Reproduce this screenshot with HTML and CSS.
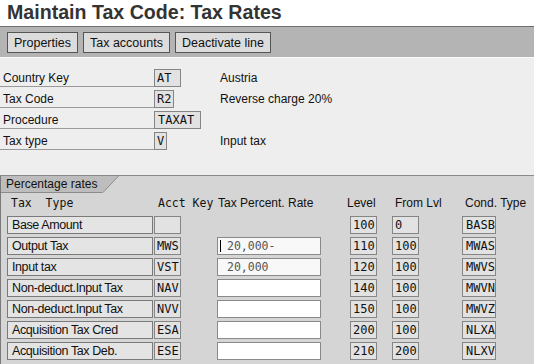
FILE: index.html
```html
<html>
<head>
<title>Maintain Tax Code: Tax Rates</title>
<link rel="stylesheet" href="styles.css">
</head>
<body>
	<div id='screen'>

		<h1 class="title">Maintain Tax Code: Tax Rates</h1>

		<div class="toolbar">
			<button class="btn">Properties</button>
			<button class="btn">Tax accounts</button>
			<button class="btn">Deactivate line</button>
		</div>

		<div class="head">
			<div class="hrow">
				<span class="hlabel">Country Key</span>
				<span class="fld w2">AT</span>
				<span class="desc">Austria</span>
			</div>
			<div class="hrow">
				<span class="hlabel">Tax Code</span>
				<span class="fld w1">R2</span>
				<span class="desc">Reverse charge 20%</span>
			</div>
			<div class="hrow">
				<span class="hlabel">Procedure</span>
				<span class="fld w3">TAXAT</span>
				<span class="desc"></span>
			</div>
			<div class="hrow">
				<span class="hlabel">Tax type</span>
				<span class="fld w0">V</span>
				<span class="desc">Input tax</span>
			</div>
		</div>

		<div class="panel">
			<div class="tabs">
				<span class="tab">Percentage rates</span>
				<svg class="tab-edge" width="17" height="17" viewBox="0 0 17 17">
					<polygon points="0,0 16,0 0,17" fill="#bdbdbd"/>
					<line x1="16.5" y1="0" x2="0.5" y2="17" stroke="#8a8a8a" stroke-width="1"/>
				</svg>
			</div>

			<div class="grid">
				<span class="colhead mono">Tax  Type</span>
				<span class="colhead mono">Acct Key</span>
				<span class="colhead">Tax Percent. Rate</span>
				<span class="colhead lvl">Level</span>
				<span class="colhead from">From Lvl</span>
				<span class="colhead cond">Cond. Type</span>

				<span class="lbl">Base Amount</span>
				<span><span class="fld w2"></span></span>
				<span></span>
				<span><span class="fld w3n">100</span></span>
				<span><span class="fld w3n">0</span></span>
				<span><span class="fld w4">BASB</span></span>

				<span class="lbl">Output Tax</span>
				<span><span class="fld w2">MWS</span></span>
				<span><span class="rate filled cursor">20,000-</span></span>
				<span><span class="fld w3n">110</span></span>
				<span><span class="fld w3n">100</span></span>
				<span><span class="fld w4">MWAS</span></span>

				<span class="lbl">Input tax</span>
				<span><span class="fld w2">VST</span></span>
				<span><span class="rate filled">20,000</span></span>
				<span><span class="fld w3n">120</span></span>
				<span><span class="fld w3n">100</span></span>
				<span><span class="fld w4">MWVS</span></span>

				<span class="lbl">Non-deduct.Input Tax</span>
				<span><span class="fld w2">NAV</span></span>
				<span><span class="rate"></span></span>
				<span><span class="fld w3n">140</span></span>
				<span><span class="fld w3n">100</span></span>
				<span><span class="fld w4">MWVN</span></span>

				<span class="lbl">Non-deduct.Input Tax</span>
				<span><span class="fld w2">NVV</span></span>
				<span><span class="rate"></span></span>
				<span><span class="fld w3n">150</span></span>
				<span><span class="fld w3n">100</span></span>
				<span><span class="fld w4">MWVZ</span></span>

				<span class="lbl">Acquisition Tax Cred</span>
				<span><span class="fld w2">ESA</span></span>
				<span><span class="rate"></span></span>
				<span><span class="fld w3n">200</span></span>
				<span><span class="fld w3n">100</span></span>
				<span><span class="fld w4">NLXA</span></span>

				<span class="lbl">Acquisition Tax Deb.</span>
				<span><span class="fld w2">ESE</span></span>
				<span><span class="rate"></span></span>
				<span><span class="fld w3n">210</span></span>
				<span><span class="fld w3n">200</span></span>
				<span><span class="fld w4">NLXV</span></span>
			</div>
		</div>
	</div>
</body>
</html>
```

FILE: styles.css
```css
body{
	margin:0;padding:0;
	overflow:hidden;
}

	div#screen{
		width:534px;
		height:364px;
		overflow:hidden;
		background-color:#eeeeee;
		font-family:"Liberation Sans", Arial, sans-serif;
		font-size:12px;
		color:#111;
	}

	h1.title{
		margin:0;
		height:26px;
		padding:0 7px;
		font-size:19.6px;
		line-height:24px;
		font-weight:bold;
		color:#333;
		background-color:#ffffff;
		border-bottom:1px solid #6e6e6e;
		white-space:nowrap;
	}

	div.toolbar{
		display:flex;
		gap:5px;
		height:25px;
		padding:5px 7px 0 7px;
		background-color:#b4b4b4;
		border-bottom:1px solid #fafafa;
	}

	button.btn{
		height:21px;
		margin:0;
		padding:0 6px;
		font-family:"Liberation Sans", Arial, sans-serif;
		font-size:12.5px;
		color:#111;
		background-color:#dcdcdc;
		border:1px solid #555;
		border-radius:0;
	}

	div.head{
		height:106px;
		padding-top:11px;
		display:flex;
		flex-direction:column;
		gap:3px;
	}

	div.hrow{
		display:grid;
		grid-template-columns:154px 66px auto;
		align-items:center;
		height:18px;
	}

	span.hlabel{
		height:18px;
		line-height:18px;
		padding-left:3px;
		box-sizing:border-box;
		border-bottom:1px solid #9a9a9a;
	}

	span.desc{
		line-height:18px;
	}

	span.fld{
		display:inline-block;
		height:18px;
		line-height:16px;
		box-sizing:border-box;
		border:1px solid #858585;
		background-color:#e2e2e2;
		font-family:"DejaVu Sans Mono", "Liberation Mono", monospace;
		font-size:12px;
		padding-left:3px;
		color:#111;
		vertical-align:top;
		white-space:nowrap;
		overflow:hidden;
	}

	span.fld.w0{ width:13px; padding-left:2px; }
	span.fld.w1{ width:20px; padding-left:2px; }
	span.fld.w2{ width:27px; padding-left:2px; }
	span.fld.w3{ width:47px; }
	span.fld.w3n{ width:27px; padding-left:2px; }
	span.fld.w4{ width:34px; }

	div.panel{
		height:188px;
		border-top:1px solid #8a8a8a;
		border-left:1px solid #7a7a7a;
		background-color:#d5d5d5;
	}

	div.tabs{
		display:flex;
		height:17px;
	}

	span.tab{
		height:17px;
		line-height:16px;
		padding-left:5px;
		width:101px;
		box-sizing:border-box;
		background-color:#bdbdbd;
		border-bottom:1px solid #8a8a8a;
		font-size:12px;
		color:#111;
		white-space:nowrap;
	}

	svg.tab-edge{
		display:block;
	}

	div.grid{
		display:grid;
		grid-template-columns:147px 63px 133px 42px 70px auto;
		grid-template-rows:20px;
		grid-auto-rows:18px;
		row-gap:3px;
		padding-left:6px;
	}

	span.colhead{
		height:20px;
		line-height:21px;
		padding-left:1px;
		white-space:pre;
		font-size:12px;
	}

	span.colhead.mono{
		font-family:"DejaVu Sans Mono", "Liberation Mono", monospace;
		font-size:11.5px;
		padding-left:4px;
	}

	span.colhead.lvl{ margin-left:-4px; }
	span.colhead.from{ padding-left:3px; }
	span.colhead.cond{ padding-left:3px; }

	span.lbl{
		display:block;
		width:146px;
		height:18px;
		line-height:17px;
		box-sizing:border-box;
		border:1px solid #7a7a7a;
		background-color:#e4e4e4;
		padding-left:4px;
		font-size:12.5px;
		letter-spacing:-0.4px;
		white-space:nowrap;
	}

	span.rate{
		display:inline-block;
		position:relative;
		width:104px;
		height:18px;
		line-height:16px;
		box-sizing:border-box;
		border:1px solid #8a8a8a;
		background-color:#ffffff;
		padding-left:9px;
		font-family:"DejaVu Sans Mono", "Liberation Mono", monospace;
		font-size:11.5px;
		vertical-align:top;
	}

	span.rate.filled{
		background-color:#f8f8f8;
		color:#555;
	}

	span.rate.cursor::before{
		content:"";
		position:absolute;
		left:2px;
		top:2px;
		width:1px;
		height:12px;
		background-color:#000;
	}
```
